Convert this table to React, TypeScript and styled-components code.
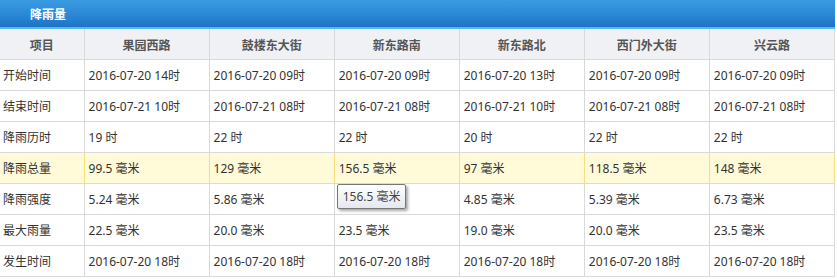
import React from "react";
import styled, { createGlobalStyle, css } from "styled-components";

const Global = createGlobalStyle`
  html, body { margin: 0; padding: 0; background: #fff; }
  body { font-family: "Noto Sans", "Noto Sans CJK SC", sans-serif; }
`;

const Panel = styled.div`
  width: 835px;
  display: flex;
  flex-direction: column;
`;

const TitleBar = styled.div`
  height: 27px;
  background: linear-gradient(to bottom, #3a9be1 0%, #2a88d6 55%, #1d73c6 100%);
  border-bottom: 2px solid #58b9e6;
  display: flex;
  align-items: center;
  padding-left: 30px;
  color: #fff;
  font-weight: bold;
  font-size: 12px;
  font-family: "Noto Sans CJK SC", sans-serif;
`;

const Table = styled.table`
  border-collapse: collapse;
  table-layout: fixed;
  width: 835px;
  font-size: 12px;
  color: #333;
`;

const HeadCell = styled.th`
  height: 30px;
  padding: 0;
  background: #f0f1f5;
  border: 1px solid #d9d9d9;
  border-top: none;
  color: #555;
  font-weight: bold;
  font-size: 12px;
  font-family: "Noto Sans CJK SC", sans-serif;
  text-align: center;
`;

const Row = styled.tr<{ $hl?: boolean }>`
  ${(p) =>
    p.$hl &&
    css`
      background: #fffbd8;
    `}
`;

const Cell = styled.td<{ $hl?: boolean; $first?: boolean }>`
  height: 30px;
  padding: 0 0 0 ${(p) => (p.$first ? "3px" : "4px")};
  border: 1px solid ${(p) => (p.$hl ? "#f6df7c" : "#d9d9d9")};
  white-space: nowrap;
  position: relative;
  font-family: "Noto Sans", "Noto Sans CJK SC", sans-serif;
`;

const Tooltip = styled.div`
  position: absolute;
  left: 2px;
  top: 0px;
  padding: 2px 5px 3px 5px;
  border: 1px solid #767676;
  border-radius: 2px;
  background: linear-gradient(to bottom, #ffffff 0%, #e6e8f0 100%);
  box-shadow: 2px 2px 3px rgba(0, 0, 0, 0.35);
  color: #444;
  font-size: 12px;
  white-space: nowrap;
  z-index: 2;
`;

const columns = ["果园西路", "鼓楼东大街", "新东路南", "新东路北", "西门外大街", "兴云路"];

const rows: { label: string; values: string[]; hl?: boolean }[] = [
  { label: "开始时间", values: ["2016-07-20 14时", "2016-07-20 09时", "2016-07-20 09时", "2016-07-20 13时", "2016-07-20 09时", "2016-07-20 09时"] },
  { label: "结束时间", values: ["2016-07-21 10时", "2016-07-21 08时", "2016-07-21 08时", "2016-07-21 10时", "2016-07-21 08时", "2016-07-21 08时"] },
  { label: "降雨历时", values: ["19 时", "22 时", "22 时", "20 时", "22 时", "22 时"] },
  { label: "降雨总量", values: ["99.5 毫米", "129 毫米", "156.5 毫米", "97 毫米", "118.5 毫米", "148 毫米"], hl: true },
  { label: "降雨强度", values: ["5.24 毫米", "5.86 毫米", "", "4.85 毫米", "5.39 毫米", "6.73 毫米"] },
  { label: "最大雨量", values: ["22.5 毫米", "20.0 毫米", "23.5 毫米", "19.0 毫米", "20.0 毫米", "23.5 毫米"] },
  { label: "发生时间", values: ["2016-07-20 18时", "2016-07-20 18时", "2016-07-20 18时", "2016-07-20 18时", "2016-07-20 18时", "2016-07-20 18时"] },
];

export default function App() {
  return (
    <>
      <Global />
      <Panel>
        <TitleBar>降雨量</TitleBar>
        <Table>
          <colgroup>
            <col style={{ width: 84 }} />
            {columns.map((c) => (
              <col key={c} style={{ width: 125 }} />
            ))}
          </colgroup>
          <thead>
            <tr>
              <HeadCell style={{ borderLeft: "none" }}>项目</HeadCell>
              {columns.map((c) => (
                <HeadCell key={c}>{c}</HeadCell>
              ))}
            </tr>
          </thead>
          <tbody>
            {rows.map((r, ri) => (
              <Row key={r.label} $hl={r.hl}>
                <Cell $first $hl={r.hl} style={{ borderLeft: "none" }}>
                  {r.label}
                </Cell>
                {r.values.map((v, i) => (
                  <Cell key={i} $hl={r.hl}>
                    {v}
                    {ri === 4 && i === 2 && <Tooltip>156.5 毫米</Tooltip>}
                  </Cell>
                ))}
              </Row>
            ))}
          </tbody>
        </Table>
      </Panel>
    </>
  );
}
